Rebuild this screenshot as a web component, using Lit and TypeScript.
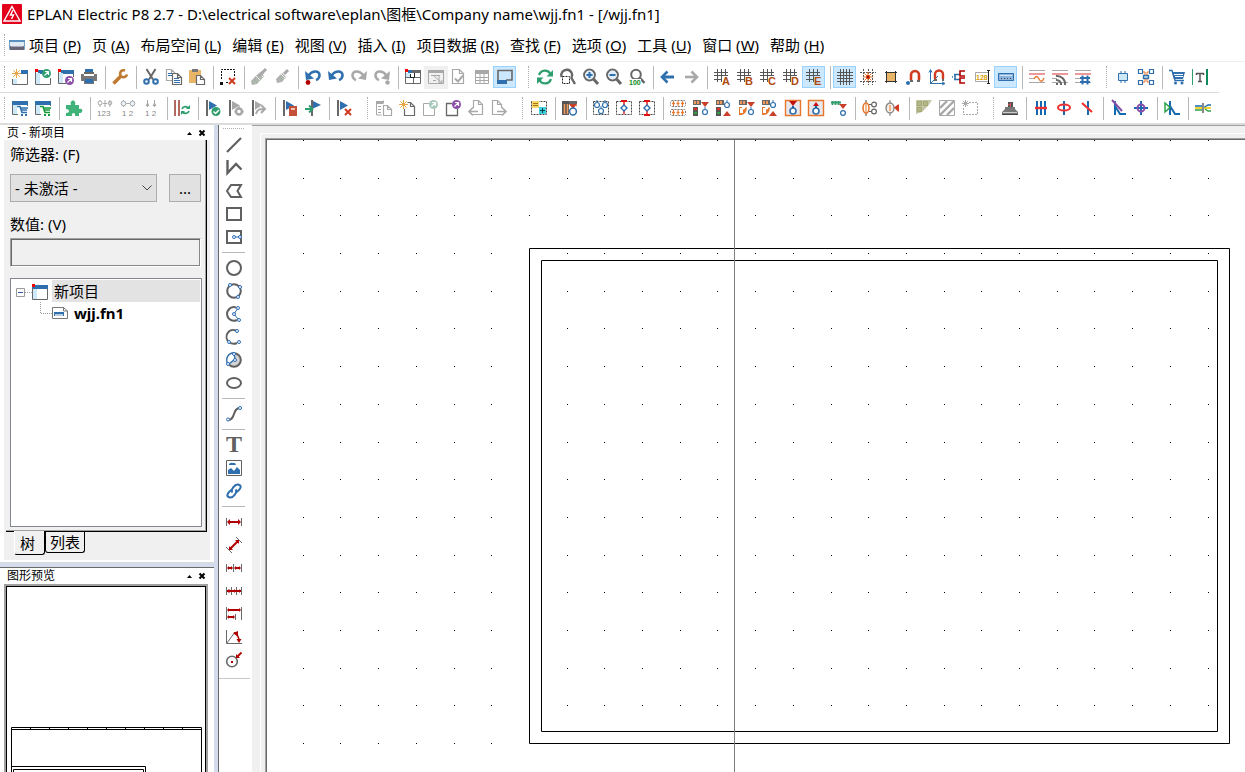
import { LitElement, html, svg, css, SVGTemplateResult } from 'lit';
import { customElement, property, state } from 'lit/decorators.js';
import { classMap } from 'lit/directives/class-map.js';

type Art = SVGTemplateResult | SVGTemplateResult[];

const G = '#686868';
const L = '#a8a8a8';
const B = '#2f6fad';
const N = '#1f5f9f';
const R = '#cf3a20';
const D = '#b00000';
const O = '#e8772e';
const GN = '#2f9e6e';
const PU = '#8a4da8';
const SKY = '#cde9f8';

const r = (x: number, y: number, w: number, h: number, f: string) =>
  svg`<rect x=${x} y=${y} width=${w} height=${h} fill=${f}></rect>`;
const p = (d: string, s: string, w = 1, f = 'none') =>
  svg`<path d=${d} stroke=${s} stroke-width=${w} fill=${f}></path>`;
const f = (d: string, c: string) => svg`<path d=${d} fill=${c}></path>`;
const c = (x: number, y: number, q: number, s: string, w = 1, fill = 'none') =>
  svg`<circle cx=${x} cy=${y} r=${q} stroke=${s} stroke-width=${w} fill=${fill}></circle>`;
const dash = (d: string, s = '#333', w = 1) =>
  svg`<path d=${d} stroke=${s} stroke-width=${w} fill="none" stroke-dasharray="2 1"></path>`;
const t = (x: number, y: number, size: number, fill: string, s: string, bold = false) =>
  svg`<text x=${x} y=${y} font-size=${size} fill=${fill} font-family="Liberation Sans, sans-serif" font-weight=${bold ? 700 : 400}>${s}</text>`;

const sun = p('M4.5 0V9M0 4.5H9M1.3 1.3L7.7 7.7M7.7 1.3L1.3 7.7', '#e8a84a');
const redX = (x: number, y: number) => p(`M${x} ${y}l6 6m0-6l-6 6`, R, 2);
const badge = (x: number, y: number, col: string) =>
  [c(x, y, 4.5, col, 0, col), p(`M${x - 2} ${y + 2}L${x + 1.5} ${y - 1.5}M${x - 1.5} ${y - 2}h3.500v3.500`, '#fff', 1.2)];
const page = (x: number, y: number, s: string, w = 9, h = 12) =>
  p(`M${x}.5 ${y}.5h${w - 4}l4 4v${h - 4}h-${w}z m${w - 4} 0v4h4`, s, 1.2, '#fff');
const flag = (col: string) => [r(1, 0, 2, 16, G), f('M4 1L12 5.500L4 10z', col)];
const brush = (x: number, y: number) =>
  [p(`M${x + 11} ${y}L${x + 7} ${y + 4}`, L, 3), f(`M${x + 5} ${y + 3}l4 4l-4 5l-5 1l-1-4z`, '#b0b0b0'), p(`M${x + 1} ${y + 9}l3 3m0-5l3 3`, '#a9cfa4', 1), p(`M${x + 4} ${y + 4}l5 5`, '#f4f4f4', 1)];
const undoArc = (col: string) => [p('M3 8C6 1 15 1 14.500 6.500C14.300 9 12.500 10.500 11 11', col, 2.6), f('M0 2L1 11L9 9.500z', col)];
const redoArc = (col: string) => [p('M13 8C10 1 1 1 1.500 6.500C1.700 9 3.500 10.500 5 11', col, 2.6), f('M16 2L15 11L7 9.500z', col)];
const lens = [c(6.5, 6, 5.4, G, 2), p('M10.500 10L15 15', G, 3)];
const gridHash = p('M3.500 0V13M7.500 0V13M11.500 0V7M0 3.500H14M0 6.500H14M0 10.500H8', '#555');
const gridLetter = (s: string): Art => [gridHash, t(8, 16, 11, '#b04a10', s, true)];
const frame = [r(0, 1, 16, 4, B), p('M.5 5V14.500H15.500V5', G), r(1, 5, 4, 9, SKY)];
const cart = (col: string) => [p('M5 6.500h3l2 6h5M8 8h8M9 10h6', col, 1.6), r(9, 14, 2, 2, col), r(13, 14, 2, 2, col)];
const dashBox = dash('M.5 1.500H15.500V14.500H.5z', '#444');
const drop = (x: number, y: number, col = B) => [p(`M${x} ${y - 5}v2`, col), c(x, y, 2.5, col, 1.2, '#fff')];
const device = [r(0, 0, 8, 5, G), r(1, 1, 2, 3, '#f29a5c'), r(4, 1, 2, 3, '#f29a5c')];
const rdTri = (x: number, y: number, up: boolean) =>
  up ? f(`M${x} ${y}l4 5h-8z`, '#c8402a') : f(`M${x - 4} ${y}h8l-4 5z`, '#c8402a');
const traffic = [r(0, 7, 5, 9, '#555'), r(1, 8, 3, 2, '#e03020'), r(1, 12, 3, 2, '#30a040')];
const pn = (x: number, y: number) => c(x, y, 1.5, '#2b6cb8', 1, '#fff');
const arrow2 = (a: number, b: number, y: number, h = 3) => [
  p(`M${a + 1} ${y}H${b - 1}`, D, 2), f(`M${a} ${y}l${h}-${h}v${2 * h}z`, D), f(`M${b} ${y}l-${h}-${h}v${2 * h}z`, D)];
const wave = p('M5 10q2.500-5 5 0t5-1', O, 1.4);
const lines3 = [r(0, 1, 16, 1, L), r(0, 4, 16, 2, '#e99'), r(0, 9, 5, 1, L), r(0, 13, 16, 1, L)];

const icons: Record<string, Art> = {
  newProject: [r(9, 1, 7, 4, B), r(1, 10, 4, 5, SKY), p('M15.500 5V15.500H.5V10', G), sun],
  openProject: [r(3, 1, 5, 4, B), r(1, 4, 4, 11, SKY), p('M.5 3V15.500H15.500V9', G), r(0, 0, 3, 3, '#f00'), ...badge(11.5, 4.5, GN)],
  closeProject: [r(3, 1, 13, 4, B), r(1, 4, 4, 10, SKY), p('M.5 3V14.500H8M15.500 5V8', G), r(0, 0, 3, 3, '#f00'), ...badge(11.5, 11.5, PU)],
  print: [r(4, 0, 8, 3, B), r(3, 3, 10, 2, G), r(0, 5, 16, 7, '#777'), r(3, 5, 10, 2, '#fff'), r(3, 9, 10, 6, '#777'), r(4, 10, 8, 4, B)],
  wrench: [p('M1.500 14.500L9 7', '#bf7a30', 3.6), p('M13 1.500a3.500 3.500 0 1 0 2 4', '#bf7a30', 2.6)],
  cut: [p('M3.500 0L10 10.500M12.500 0L6 10.500', G, 2), c(3.5, 12.5, 2.3, B, 2), c(12.5, 12.5, 2.3, B, 2)],
  copy: [page(0, 0, L, 9, 11), p('M2 4.500h5M2 6.500h5', B), page(6, 4, G, 9, 11), p('M8 9.500h5M8 11.500h6M8 13.500h6', B)],
  paste: [r(0, 1, 12, 13, '#e9b566'), r(3, 0, 6, 3, '#777'), page(7, 6, G, 8, 9)],
  clear: [dash('M1.500 10V.5H14.500V8M6 13.500h3', '#111'), r(0, 13, 3, 3, '#111'), redX(9, 9)],
  brushAll: [brush(4, 0), brush(1, 3)],
  brush: [brush(3, 1)],
  undoList: [undoArc(B), c(3, 13.5, 2.4, D, 0, D)],
  undo: undoArc(B),
  redo: redoArc(L),
  redoList: [redoArc(L), c(13.5, 13.5, 2.2, L, 0, L)],
  pages: [r(7, 1, 9, 3, G), p('M.5 1.500H15.500V14.500H.5zM8.500 8V14M1 8.500H15', G), r(1, 4, 4, 4, SKY), p('M5.500 5v4M9.500 4v4.500H5', '#222'), r(3, 1, 4, 3, B), r(0, 0, 3, 3, '#f00')],
  navigate: [r(-4, -3, 24, 23, '#f0f0f0'), p('M.5 1.500H15.500V14.500H.5z', L), r(0, 1, 16, 3, L), p('M3 6.500h9M5 11.500h3M11 6v8M6 7l8 7m0-3v3h-3', L)],
  check: [page(1, 0, L, 11, 14), p('M4 9.500l3 3l5-6', L, 2)],
  table: [r(1, 1, 14, 4, L), p('M1.500 1.500H14.500V14.500H1.500zM6 5V14M10 5V14M1 8.500H15M1 11.500H15', L)],
  titleBlock: [p('M1 11V1.500H15V11H9', G, 1.6), r(0, 11, 10, 4, B)],
  refresh: [p('M2 6C4 .5 11 0 13.500 5', GN, 2.2), f('M16 1v6.500h-6.500z', GN), p('M14 10C12 15.500 5 16 2.500 11', GN, 2.2), f('M0 15V8.500h6.500z', GN)],
  zoomArea: [p('M1.500 8a5.500 5.500 0 1 1 10 1L15 15', G, 2.4), dash('M2.500 7.500h7v7h-7z', '#222')],
  zoomIn: [lens, c(6.5, 6, 4.2, '#dfeefa', 0, '#dfeefa'), p('M3.500 6h6M6.500 3v6', B, 2)],
  zoomOut: [lens, c(6.5, 6, 4.2, '#dfeefa', 0, '#dfeefa'), p('M3.500 6h6', B, 2)],
  zoomAll: [c(7, 5.5, 4.8, G, 2), p('M11 9L15.500 14', G, 2.6), r(0, 10, 12, 6, '#fff'), t(0, 16, 7, '#0a8a20', '100', true)],
  back: [p('M2 8H14', B, 3), p('M7.500 2.500L2 8L7.500 13.500', B, 2.6)],
  forward: [p('M2 8H13', L, 2.6), p('M8.500 2.500L14 8L8.500 13.500', L, 2.6)],
  gridA: gridLetter('A'), gridB: gridLetter('B'), gridC: gridLetter('C'), gridD: gridLetter('D'), gridE: gridLetter('E'),
  grid: p('M3.500 0V16M6.500 0V16M9.500 0V16M12.500 0V16M0 3.500H16M0 6.500H16M0 9.500H16M0 12.500H16', '#555'),
  snap: [dash('M3.500 0V16M12.500 0V16M8.500 0V16M0 3.500H16M0 12.500H16', '#555'), p('M8 3V13M3 8H13', O), p('M4.500 4.500L11.500 11.500M11.500 4.500L4.500 11.500', O), c(8, 8, 1.6, '#e04a10', 1, '#901010')],
  align: [r(4, 4, 8, 8, '#e9b566'), p('M3.500 2V14M12.500 2V14M2 3.500H14M2 12.500H14', '#333', 1)],
  magnet: [p('M5 11V6a4 4 0 0 1 8 0V11', R, 2.6), r(4, 11, 3, 2, G), r(11, 11, 3, 2, G), c(2, 14, 2, B, 0, B)],
  magnetAxis: [p('M1.500 15V2M0 3.500l1.500-3l1.500 3M1 14.500H15M13 13l3 1.500l-3 1.500M2 14L9 7', B), p('M6 10V5.500a4 4 0 0 1 8 0V10', R, 2.4), r(5, 10, 3, 2, G), r(13, 10, 2, 2, G)],
  connect: [p('M2 5.500h6M2 10.500h6M3 5v6M1 8h-1', B, 1.6), p('M13 2H8v5h5M13 9H8v5h5', D, 1.6)],
  dimInput: [p('M.5 3.500h13v9H.5z', L, 1, '#fff'), t(1, 11, 7, '#d9a000', '128', true), p('M13.500 2v12M12 1.500h3M12 14.500h3', '#222')],
  ruler: [r(0, 4, 16, 8, '#8fb4dc'), p('M.5 4.500h15v7h-15z', B), p('M2 6.500h12', SKY), p('M3.500 9v1M6.500 9v1M9.500 9v1M12.500 9v1', '#345')],
  sine: [lines3, wave],
  signal: [lines3, p('M4 7a8 8 0 0 1 9 9M4 11a4.500 4.500 0 0 1 5 5', G, 2), r(4, 14, 2, 2, G)],
  bus: [lines3, p('M5 9h10M5 13h10M7.500 6.500v9M12.500 6.500v9', B, 2)],
  part: [r(4, 4, 8, 8, SKY), p('M3.500 4.500h9v7h-9zM6 2v2M10 2v2M6 12v2M10 12v2', B)],
  partNet: [r(5, 6, 6, 4, SKY), p('M5.500 6.500h5v3h-5z', B, 1.4), p('M.5.5h4v4h-4zM11.500.5h4v4h-4zM.5 11.500h4v4h-4zM11.500 11.500h4v4h-4z', B, 1.2), p('M5 3h2v3M11 3H9v3M5 13h2v-3M11 13H9v-3', O)],
  cart: [f('M3 3h13l-2 7H5z', B), p('M0 1.500h3l3 10h9', B, 1.4), p('M5 5.500h9M6 7.500h8', '#fff'), c(6.5, 14, 1.5, B, 0, B), c(13, 14, 1.5, B, 0, B)],
  textBar: [r(0, 0, 1, 16, GN), r(14, 0, 2, 16, '#0f8a5c'), p('M4 4.500h8M8 4V13M6 12.500h4M4.500 4v2M11.500 4v2', '#555', 1.5)],

  cartBlue: [frame, r(6, 6, 10, 10, '#fff'), cart(B)],
  cartGreen: [frame, r(6, 6, 10, 10, '#fff'), cart('#159a3a')],
  plugin: [f('M0 5h5c-2-6 6-6 4 0h4v4c5-2 4 5 0 4v3H9c1-4-4-4-3 0H0v-3c4 0 4-4 0-4z', '#3fb37a')],
  renumber: [p('M3 0v1M3 5v2M8 0v7M6 3.500h4M13 0v7', L), c(3, 3, 2, L), c(13, 3, 1.8, L), t(0, 16, 8, '#888', '123')],
  number2: [p('M3.500 0v1M12.500 0v1M3.500 6v1M12.500 6v1M6 3.500h4', L), c(3.5, 3.5, 2.4, L, 1, '#e7f2fb'), c(12.5, 3.5, 2.4, L, 1, '#e7f2fb'), t(2, 16, 8, '#888', '1 2')],
  number3: [p('M4.500 0v7M11.500 0v7', L), f('M2.500 6L4.500 2L6.500 6zM9.500 6L11.500 2L13.500 6z', L), t(2, 16, 8, '#888', '1 2')],
  sync: [r(0, 0, 2, 16, '#b06a60'), r(4, 0, 2, 16, '#b06a60'), p('M8 9c1-3 5-3 6-1M15 11c-1 3-5 3-6 1', GN, 1.8), f('M16 5v4h-4zM7 15v-4h4z', GN)],
  flagOk: [flag(B), c(11, 11.5, 4.5, GN, 0, GN), p('M8.500 11.500l2 2l3.500-3.500', '#fff', 1.5)],
  flagGear: [flag(L), c(11, 11.5, 3, L, 2.5, '#fff'), p('M11 6.500v2M11 15v-2M6.500 11.500h2M15.500 11.500h-2', L, 2)],
  flagNext: [flag(L), p('M5 14c1-5 4-5 8-5M10 5l4 4l-4 4', '#fff', 4), p('M5 14c1-5 4-5 8-5M10 5l4 4l-4 4', L, 2)],
  flagBook: [flag(B), r(7, 6, 8, 10, '#c4503a'), r(9, 8, 4, 2, '#f0c0b0')],
  flagGo: [r(6, 0, 2, 16, G), f('M8 1L16 5L8 8.500z', B), p('M0 9h6M4 5.500L7.500 9L4 12.500', GN, 1.8)],
  flagDel: [flag(B), redX(9, 9)],
  list: [r(0, 1, 7, 3, L), p('M.5 1v14h5M2 6.500h3M2 9.500h3M2 12.500h3M7.500.5v3', L), page(7, 5, L, 8, 10)],
  pageNew: [page(5, 2, G, 10, 13), c(4.5, 4.5, 4.5, '#fff', 0, '#fff'), sun],
  pageOpen: [p('M7 3.500H1.500V15.500H12.500V9', L), badge(11.5, 4.5, '#a9c9b9')],
  pageClose: [p('M7 3.500H1.500V15.500H12.500V9', G, 1.3), badge(11.5, 4.5, PU)],
  pagePrev: [page(5, 0, L, 9, 14), r(4, 8, 4, 6, '#fff'), p('M1 11.500h9M5 7.500L1 11.500l4 4', L, 1.6)],
  pageNext: [page(1, 0, L, 9, 14), r(8, 8, 4, 6, '#fff'), p('M6 11.500h9M11 7.500l4 4l-4 4', L, 1.6)],
  windowMacro: [dashBox, r(1, 1, 7, 7, '#f8d66a'), p('M2 3.500h5M2 5.500h5', '#a07a10'), r(8, 7, 7, 7, '#40d0e0'), p('M9 10.500h5M11.500 8v5', '#044', 1)],
  deviceIns: [r(0, 1, 15, 3, G), r(0, 1, 7, 14, '#555'), p('M2.500 4v10M5.500 4v10', '#f29a5c', 1.6), dash('M8 5.500h7', O), rdTri(11, 4, false), c(11, 11.5, 3.4, B, 1.5, '#fff')],
  symbols: [dashBox, drop(4, 5), drop(12, 5), drop(8, 11)],
  symbolRed: [dashBox, r(5, 0, 6, 2, '#e01010'), p('M8 2v3M8 11v3', '#e01010', 1.4), p('M8 5l3 3l-3 3l-3-3z', B, 1.4, '#fff')],
  symbolBoth: [dashBox, r(5, 0, 6, 2, '#e01010'), r(5, 14, 6, 2, '#e01010'), p('M8 2v12', '#e01010', 1.4), p('M8 5l3 3l-3 3l-3-3z', B, 1.4, '#fff')],
  multi: [dash('M1.500.500h13l1 2v3l-1 1h-13l-1-1v-3zM1.500 9.500h13l1 1v4l-1 1h-13l-1-1v-4z', '#777'), p('M3.500 1v5M8 1v5M12.500 1v5M3.500 10v5M8 10v5M12.500 10v5', O), p('M2 3.500h3M6.500 3.500h3M11 3.500h3M2 12.500h3M6.500 12.500h3M11 12.500h3', O, 1.5)],
  dev1: [device, traffic, rdTri(12, 2, false), drop(12, 12)],
  dev2: [device, traffic, drop(11, 5), rdTri(11, 11, true)],
  dev3: [device, f('M0 7h3q1 5 4 0l1 1q-1 7-6 7H0z', O), r(1, 8, 3, 5, '#fff'), rdTri(12, 2, false), drop(12, 12)],
  dev4: [device, f('M0 7h3q1 5 4 0l1 1q-1 7-6 7H0z', O), r(1, 8, 3, 5, '#fff'), drop(11, 5), rdTri(11, 11, true)],
  boxDown: [p('M.5.5h15v15H.5z', O, 1.4, '#e8e8ec'), f('M4 1h8L8 6z', '#c01010'), c(8, 11, 3, B, 1.6, '#fff'), r(7, 6, 2, 2, N)],
  boxUp: [p('M.5.5h15v15H.5z', O, 1.4, '#e8e8ec'), f('M8 2l3 4H5z', '#c01010'), c(8, 11, 3, B, 1.6, '#fff'), r(7, 6, 2, 2, N)],
  resistor: [p('M0 2.500h10M1.500 1v4M4.500 1v4M7.500 1v4', GN, 1.8), rdTri(12, 4, false), c(12, 13, 2.4, B, 1.2, '#fff')],
  relay1: [p('M4 0v16', '#444'), svg`<ellipse cx="4" cy="8" rx="3" ry="5" fill="#fff" stroke=${O} stroke-width="1.6"></ellipse>`, p('M4 4v8', O), c(12, 4.5, 2.4, '#666', 1.2, '#fff'), c(12, 11.5, 2.4, '#666', 1.2, '#fff'), p('M7 4.500h3M7 11.500h3', '#666')],
  relay2: [p('M5 0v16', '#777'), svg`<ellipse cx="5" cy="8" rx="4" ry="5" fill="#f4eee6" stroke="#888" stroke-width="1.4"></ellipse>`, p('M5 5v6', O), f('M9 7.500l4-3h1v7h-1z', R)],
  area: [f('M0 0h16L12 6L6 12L0 14z', '#c4c6a8'), p('M1.500 1.500h4v4h-4zM7.500 1.500h4v4h-4zM1.500 7.500h4v4h-4z', '#a4a870', 1, '#b4b888')],
  hatch: [p('M.5.5h15v15H.5z', L), p('M1 8L8 1M1 15L15 1M8 15L15 8', L, 2.4)],
  dashedNew: [dash('M7 2.500H15.500V14.500H1.500V8', L), p('M3.500 0v7M0 3.500h7M1 1l5 5M6 1L1 6', L)],
  terminal: [f('M0 12l3-3V7h10v2l3 3v3H0z', '#777'), r(6, 2, 5, 5, '#555'), p('M1 12.500h14', '#ccc'), p('M8.500 3v4M6 4.500h3', '#e05050'), r(0, 14, 16, 1, '#444')],
  wires: [p('M4 1v14M8 1v14M12 1v14', '#1668b0', 2), p('M2 8h12', '#f03030', 2.4)],
  wireEllipse: [p('M8 1v14', '#1668b0', 2), svg`<ellipse cx="8" cy="7.5" rx="6" ry="3" fill="none" stroke="#f03030" stroke-width="2"></ellipse>`],
  wireSlash: [p('M9 1v14', '#1668b0', 2), p('M3 3l10 9', '#f03030', 2.2)],
  bend: [p('M5 1v14M5 6l5 8h6', '#1668b0', 2), p('M2 0l10 11', PU, 2)],
  cross: [p('M8 1v14M1 8h14', '#1668b0', 2), c(8, 8, 3.5, PU, 2)],
  branch: [p('M6 1v14M6 6l5 8h5', '#1668b0', 2), p('M1 3l5 4.500L1 12z', '#20a040', 1.4)],
  cable: [p('M0 6h8M8 8L13 5h3', '#1668b0', 1.4), p('M0 8h16', '#f0c800', 1.6), p('M0 10h7M10 9l3 2h3', '#30a050', 1.4), r(7, 3, 2, 10, '#888')],

  line: p('M1 15L15 1', '#606060', 2.2),
  polyline: p('M1.500 0V13L10 4L15.500 9.500', '#606060', 2.4),
  polygon: p('M1 8L5 2H15L11.500 8L15 14H5z', '#606060', 2),
  rect: p('M1 2H15V14H1z', '#606060', 2),
  rectC: [p('M1 2H15V14H1z', '#606060', 2), p('M9 8h5', B), pn(8, 8), pn(14, 8)],
  circle: c(8, 8, 7, '#606060', 2),
  circle3: [c(8, 8, 6.8, '#606060', 2), pn(4, 2), pn(14, 4), pn(12, 14)],
  arcC: [p('M10 1.500A6.800 6.800 0 1 0 11 14', '#606060', 2), p('M12 2L8 8L12 13', B), pn(12, 2), pn(8, 8), pn(13, 14)],
  arc3: [p('M10 1.500A6.800 6.800 0 0 0 3 13Q7 16 11 14', '#606060', 2), pn(11, 2), pn(3, 13), pn(13, 13)],
  sector: [c(8, 8, 6.8, '#606060', 2, '#d4d4d4'), p('M2 12A7 7 0 0 1 8 1L9 7L3 12', B, 1.4, '#fff'), pn(8, 2), pn(9, 8), pn(2, 12)],
  ellipse: svg`<ellipse cx="8" cy="8" rx="7" ry="5" fill="none" stroke="#606060" stroke-width="2"></ellipse>`,
  spline: [p('M2 14C10 14 6 2 14 2', '#606060', 2), pn(2, 13.5), pn(14, 2)],
  text: svg`<text x="8" y="15" font-size="24" font-weight="700" text-anchor="middle" fill="#606060" font-family="Liberation Serif, serif">T</text>`,
  image: [p('M.5.5h15v15H.5z', '#606060', 1, '#fff'), f('M2 14V10l3-2l3 3l3-4l3 3v4zM3 4q2-2 4-1h2l1 2H3z', B)],
  link: [p('M6.500 9.500C4 7 9 1 12 1.500C16 2.500 15 5 12.500 7.500L10 9.500', B, 2), p('M9.500 6.500C12 9 7 15 4 14.500C0 13.500 1 11 3.500 8.500L6 6.500', B, 2)],
  dimH: [p('M.5 4v8M15.500 4v8', G), arrow2(1, 15, 8, 3)],
  dimA: [p('M0 10l6 6M10 0l6 6', G), p('M4 12L12 4', D, 2), f('M3 13V9l4 4zM13 3v4L9 3z', D)],
  dimChain: [p('M.5 4v8M7.500 4v8M15.500 4v8', G), arrow2(1, 7, 8, 2), arrow2(8, 15, 8, 2)],
  dimInc: [p('M.5 4v8M5.500 4v8M10.500 4v8M15.500 4v8', G), p('M1 8H15', D, 2), f('M1 8l2-2v4zM5 8l-2-2v4zM10 8l-2-2v4zM15 8l-2-2v4z', D)],
  dimBase: [p('M.5 1v13M15.500 1v13M9.500 8v6', G), arrow2(1, 15, 4, 2), arrow2(1, 9, 11, 2)],
  dimAngle: [p('M.5 1V14.500H16M1 14L9 3', G), p('M8 4Q13 6 13 12', D, 1.5), f('M7 4l5-2v5zM10.500 10h5l-2.500 4z', D)],
  dimRadius: [c(6, 9.5, 5.3, G, 1.6), r(5, 9, 2, 2, D), p('M15.500.5L11 5', D, 1.8), f('M10 6V2l4 4z', D)],
};

const row1 = (': newProject openProject closeProject print | wrench | cut copy paste | clear | brushAll brush | ' +
  'undoList undo redo redoList | pages navigate check table titleBlock* : refresh zoomArea zoomIn zoomOut zoomAll | ' +
  'back forward | gridA gridB gridC gridD gridE* | grid* snap align magnet magnetAxis connect dimInput ruler* | ' +
  'sine signal bus : part partNet | cart textBar').split(' ');
const row2 = (': cartBlue cartGreen | plugin | renumber number2 number3 | sync | flagOk flagGear flagNext | flagBook flagGo | flagDel : ' +
  'list pageNew pageOpen pageClose pagePrev pageNext : windowMacro | deviceIns | symbols symbolRed symbolBoth | ' +
  'multi dev1 dev2 dev3 dev4 boxDown boxUp resistor | relay1 relay2 | area hatch dashedNew : terminal | ' +
  'wires wireEllipse wireSlash | bend cross | branch | cable').split(' ');
const drawTools = (': line polyline polygon rect rectC | circle circle3 arcC arc3 sector ellipse | spline | ' +
  'text image link | dimH dimA dimChain dimInc dimBase dimAngle dimRadius').split(' ');

@customElement('tool-bar')
export class ToolBar extends LitElement {
  @property({ attribute: false }) items: string[] = [];
  @property({ type: Boolean, reflect: true }) vertical = false;

  static styles = css`
    :host { display: flex; align-items: center; }
    :host([vertical]) { flex-direction: column; align-items: center; }
    button { flex: none; box-sizing: border-box; width: 23px; height: 22px; border: 0; padding: 0 3px 0 4px; background: none; }
    button:hover { background: #e5f1fb; }
    button.on { background: #cce8ff; box-shadow: inset 0 0 0 1px #99d1ff; }
    svg { display: block; width: 16px; height: 16px; overflow: visible; }
    .sep { flex: none; width: 1px; height: 23px; margin: 0 2px 0 5px; background: #b8b8b8; }
    .grip { flex: none; width: 0; height: 22px; border-left: 1px dotted #b0b0b0; margin: 0 4px 0 12px; }
    .grip:first-child { margin: 0 3px 0 4px; }
    :host([vertical]) button { height: 23px; }
    :host([vertical]) .sep { width: 23px; height: 1px; margin: 4px 0 3px; }
    :host([vertical]) .grip:first-child { width: 21px; height: 0; border: 0; border-top: 1px dotted #b0b0b0; margin: 2px 0 4px; }
  `;

  render() {
    return this.items.map((item) => {
      if (item === '|') return html`<span class="sep"></span>`;
      if (item === ':') return html`<span class="grip"></span>`;
      const on = item.endsWith('*');
      const key = on ? item.slice(0, -1) : item;
      return html`<button type="button" aria-label=${key} aria-pressed=${on} class=${classMap({ on })}>
        <svg viewBox="0 0 16 16" aria-hidden="true">${icons[key]}</svg></button>`;
    });
  }
}

@customElement('panel-caption')
export class PanelCaption extends LitElement {
  @property() label = '';

  static styles = css`
    :host { display: flex; align-items: center; height: 15px; padding: 0 5px 0 7px; background: #fff; font-size: 12px; line-height: 15px; }
    span { flex: 1; }
    button { border: 0; background: none; padding: 0; width: 12px; height: 12px; }
    svg { display: block; width: 12px; height: 12px; }
  `;

  render() {
    return html`<span>${this.label}</span>
      <button type="button" aria-label="收起"><svg viewBox="0 0 12 12"><path d="M2 8h5L4.500 5z"></path></svg></button>
      <button type="button" aria-label="关闭"><svg viewBox="0 0 12 12"><path d="M2.500 3.500l5 5m0-5l-5 5" stroke="#000" stroke-width="2"></path></svg></button>`;
  }
}

const menus: [string, string][] = [
  ['项目', 'P'], ['页', 'A'], ['布局空间', 'L'], ['编辑', 'E'], ['视图', 'V'], ['插入', 'I'],
  ['项目数据', 'R'], ['查找', 'F'], ['选项', 'O'], ['工具', 'U'], ['窗口', 'W'], ['帮助', 'H'],
];

const PITCH = 37.7;

@customElement('app-root')
export class AppRoot extends LitElement {
  @state() private tab = 0;

  static styles = css`
    :host { display: flex; flex-direction: column; height: 100vh; overflow: hidden; background: #fff; color: #000;
      font: 15px/20px "Noto Sans", "Noto Sans CJK SC", sans-serif; }
    button, input, select { font: inherit; color: inherit; margin: 0; }
    .title { display: flex; align-items: center; gap: 5px; height: 28px; padding-left: 2px; white-space: nowrap; }
    .title h1 { margin: 0; font-size: 15px; font-weight: 400; }
    .logo { width: 20px; height: 20px; }
    .menu { display: flex; align-items: center; gap: 11px; height: 33px; padding-left: 4px; border-bottom: 1px solid #eee; white-space: nowrap; }
    .menu button { border: 0; padding: 0; background: none; }
    .grip { width: 0; height: 22px; border-left: 1px dotted #b0b0b0; margin-right: -7px; }
    .doc { width: 16px; height: 16px; margin-right: -7px; }
    tool-bar.row { height: 30px; }
    .rule { width: 1219px; max-width: 100%; height: 1px; background: #dcdcdc; }
    .rule.full { width: auto; height: 2px; }
    .work { flex: 1; min-height: 0; display: grid; grid-template-columns: 214px 5px 33px minmax(0, 1fr); }
    .side { display: flex; flex-direction: column; min-height: 0; }
    .split { background: #d3dbec; border-right: 1px solid #696969; }
    .dock { background: #f0f0f0; margin: 0 4px 0 4px; padding: 0 3px 4px 2px; }
    .pages { border-right: 1px solid #000; border-bottom: 1px solid #000; box-shadow: inset -1px -1px #a0a0a0; padding: 4px 4px; height: 392px; box-sizing: border-box; display: flex; flex-direction: column; }
    .pages label { display: block; }
    .filter { display: flex; justify-content: space-between; margin: 10px 0 12px; }
    .pick { position: relative; width: 147px; height: 28px; }
    select { appearance: none; width: 100%; height: 100%; padding: 0 4px; background: #e1e1e1; border: 1px solid #adadad; border-radius: 0; }
    .chev { position: absolute; right: 5px; top: 9px; width: 10px; height: 10px; pointer-events: none; }
    .more { width: 32px; height: 28px; padding: 0; background: #e1e1e1; border: 1px solid #adadad; margin-right: 1px; }
    .value { box-sizing: border-box; width: 191px; height: 29px; margin: 4px 0 11px; border: 1px solid; border-color: #a0a0a0 #fff #fff #a0a0a0; box-shadow: inset 1px 1px #696969, inset -1px -1px #888; background: #f0f0f0; padding: 0 4px; border-radius: 0; }
    .tree { flex: 1; margin: 0; padding: 1px; list-style: none; background: #fff; border: 1px solid #828790; }
    .tree ul { list-style: none; margin: 0; padding: 0; }
    .node { display: flex; align-items: center; height: 22px; }
    .node svg { flex: none; }
    .node .name { flex: 1; padding-left: 2px; background: #e3e3e3; line-height: 22px; margin-left: 3px; }
    .node.leaf .name { background: none; font-weight: 700; padding-left: 0; margin-left: 6px; }
    .tabs { display: flex; align-items: flex-start; padding-left: 8px; height: 24px; }
    .tabs button { background: #f0f0f0; border: 1px solid #000; border-top: 0; border-radius: 0 0 3px 3px; padding: 0 4px; line-height: 20px; height: 21px; width: 40px; }
    .tabs button.sel { border-left-color: #fff; width: 31px; height: 24px; margin-top: -1px; padding: 0 5px; text-align: left; }
    .bar { flex: none; height: 4px; margin: 2px 0 0; background: #d3dbec; border-top: 1px solid #dcdcdc; border-bottom: 1px solid #696969; }
    .preview { flex: 1; min-height: 0; margin: 1px 6px 0 4px; border: 2px solid #a0a0a0; border-bottom: 0; box-shadow: inset 1px 1px #000, inset -1px 0 #000; }
    .preview svg { display: block; width: 100%; height: 100%; }
    .tools { align-self: start; border-bottom: 1px solid #c8c8c8; padding: 1px 2px 7px 0; margin-right: 2px; }
    .view { background: #f0f0f0; border-top: 1px solid #a0a0a0; padding: 7px 0 0 8px; min-width: 0; min-height: 0; display: flex; }
    .mat { flex: 1; min-width: 0; display: flex; border: solid #fff; border-width: 1px 0 0 1px; padding: 4px 0 0 4px; }
    .sheet { flex: 1; min-width: 0; background: #fff; border: solid #a0a0a0; border-width: 1px 0 0 1px; box-shadow: inset 1px 1px #696969; overflow: hidden; }
    .sheet svg { display: block; width: 100%; height: 100%; }
  `;

  private dots() {
    const out: SVGTemplateResult[] = [];
    for (let j = 0; j < 18; j++) {
      for (let i = 0; i < 25; i++) {
        const x = Math.floor(37.2 + PITCH * i);
        const y = Math.floor(1.4 + PITCH * j);
        if (x === 263 && j > 2 && j < 17) continue;
        out.push(r(x, y, 1, 1, '#000'));
      }
    }
    return out;
  }

  render() {
    return html`
      <header>
        <div class="title">
          <svg class="logo" viewBox="0 0 20 20" aria-hidden="true">
            <rect width="20" height="20" rx="1" fill="#e2001a"></rect>
            ${p('M10 2.500L18 17H2z', '#fff', 1.4)}${p('M11 6L8.500 11H11.500L9.500 15', '#fff', 1.4)}
          </svg>
          <h1>EPLAN Electric P8 2.7 - D:\\electrical software\\eplan\\图框\\Company name\\wjj.fn1 - [/wjj.fn1]</h1>
        </div>
        <nav class="menu">
          <span class="grip"></span>
          <svg class="doc" viewBox="0 0 16 16" aria-hidden="true">
            ${p('M.5 3.500h15v9H.5z', '#7aa0c0', 1, '#dfe9f2')}${r(0, 3, 16, 2, '#5a90c0')}${r(1, 9, 14, 4, '#667')}${p('M2 9.500h12', '#aab')}
          </svg>
          ${menus.map(([name, key]) => html`<button type="button">${name} (<u>${key}</u>)</button>`)}
        </nav>
        <tool-bar class="row" .items=${row1}></tool-bar>
        <div class="rule"></div>
        <tool-bar class="row" .items=${row2}></tool-bar>
        <div class="rule full"></div>
      </header>
      <main class="work">
        <aside class="side">
          <panel-caption label="页 - 新项目"></panel-caption>
          <div class="dock">
            <section class="pages">
              <label for="filter">筛选器: (F)</label>
              <div class="filter">
                <div class="pick">
                  <select id="filter"><option>- 未激活 -</option></select>
                  <svg class="chev" viewBox="0 0 10 10" aria-hidden="true">${p('M.5 2.500L5 7L9.500 2.500', '#444')}</svg>
                </div>
                <button class="more" type="button">...</button>
              </div>
              <label for="value">数值: (V)</label>
              <input class="value" id="value" type="text" />
              <ul class="tree" role="tree">
                <li role="treeitem" aria-expanded="true">
                  <div class="node">
                    <svg width="37" height="22" viewBox="0 0 37 22" aria-hidden="true">
                      ${p('M4.500 8.500h8v8h-8z', '#999', 1, '#fff')}${r(6, 12, 5, 1, '#3050a0')}
                      <path d="M13 12.500h7" stroke="#999" stroke-dasharray="1 1"></path>
                      <g transform="translate(20 4)">${r(0, 1, 16, 4, B)}${r(1, 5, 4, 10, SKY)}${p('M.5 4V15.500H15.500V5', G)}${r(0, 0, 3, 3, '#f00')}</g>
                    </svg>
                    <span class="name">新项目</span>
                  </div>
                  <ul role="group">
                    <li class="node leaf" role="treeitem">
                      <svg width="56" height="22" viewBox="0 0 56 22" aria-hidden="true">
                        <path d="M28.500 0V11.500H40" fill="none" stroke="#999" stroke-dasharray="1 1"></path>
                        <g transform="translate(40 3)">${p('M.5 2.500h11l4 3.500v7.500H.5z', '#777', 1, '#fff')}${p('M11.500 2v4h4', '#777')}${r(2, 7, 10, 4, B)}${r(3, 9, 8, 2, '#bcd')}</g>
                      </svg>
                      <span class="name">wjj.fn1</span>
                    </li>
                  </ul>
                </li>
              </ul>
            </section>
            <div class="tabs" role="tablist">
              ${['树', '列表'].map((name, i) => html`<button type="button" role="tab" aria-selected=${this.tab === i}
                class=${classMap({ sel: this.tab === i })} @click=${() => (this.tab = i)}>${name}</button>`)}
            </div>
          </div>
          <div class="bar"></div>
          <panel-caption label="图形预览"></panel-caption>
          <div class="preview">
            <svg aria-hidden="true">
              ${p('M5.500 400V141.500H195.500V400M6 143.500H195M24.500 141v3M43.500 141v3M62.500 141v3M81.500 141v3M100.500 141v3M119.500 141v3M138.500 141v3M157.500 141v3M176.500 141v3', '#000')}
              ${p('M5.500 180.500H139.500V400M7.500 400V183.500H137.500V400', '#000')}
            </svg>
          </div>
        </aside>
        <div class="split"></div>
        <tool-bar class="tools" vertical .items=${drawTools}></tool-bar>
        <section class="view">
          <div class="mat">
            <div class="sheet">
              <svg aria-label="wjj.fn1" role="img">
                ${this.dots()}
                ${p('M263.500 109.500h700v495h-700zM275.500 121.500h676v471h-676z', '#000')}
                <path d="M468.500 1V2000" stroke="#808080"></path>
              </svg>
            </div>
          </div>
        </section>
      </main>
    `;
  }
}
